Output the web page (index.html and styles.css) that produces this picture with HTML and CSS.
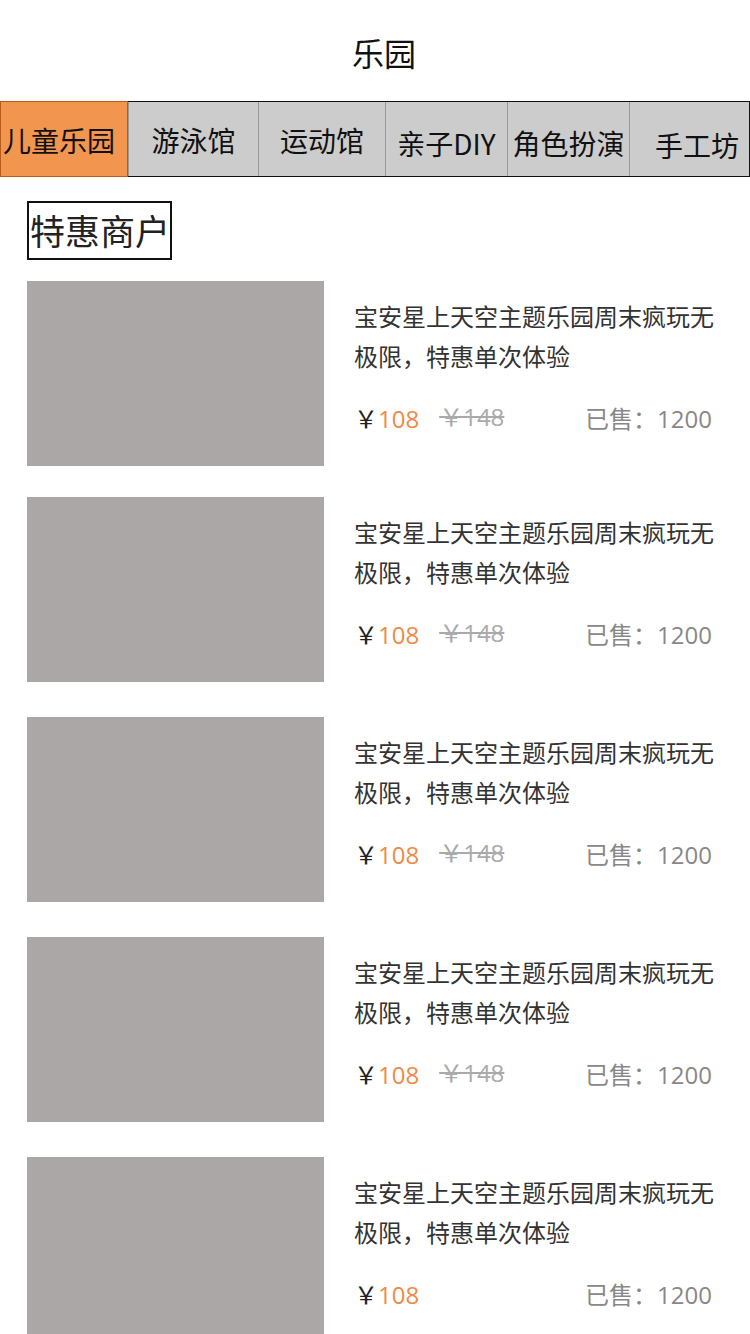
FILE: index.html
```html
<!DOCTYPE html>
<html lang="zh-CN">
<head>
<meta charset="utf-8">
<title>乐园</title>
<link rel="stylesheet" href="styles.css">
</head>
<body>
<header class="header">乐园</header>
<nav class="tabs">
  <div class="tab tab-active">儿童乐园</div>
  <div class="tab">游泳馆</div>
  <div class="tab">运动馆</div>
  <div class="tab tab-low">亲子DIY</div>
  <div class="tab tab-low">角色扮演</div>
  <div class="tab tab-lower">手工坊</div>
</nav>
<div class="section">
  <h2 class="section-title">特惠商户</h2>
</div>
<ul class="list">
  <li class="item">
    <div class="thumb"></div>
    <div class="info">
      <p class="name">宝安星上天空主题乐园周末疯玩无极限，特惠单次体验</p>
      <div class="meta">
        <span class="price"><span class="yen">￥</span>108</span>
        <span class="old">￥148</span>
        <span class="sold">已售：1200</span>
      </div>
    </div>
  </li>
  <li class="item">
    <div class="thumb"></div>
    <div class="info">
      <p class="name">宝安星上天空主题乐园周末疯玩无极限，特惠单次体验</p>
      <div class="meta">
        <span class="price"><span class="yen">￥</span>108</span>
        <span class="old">￥148</span>
        <span class="sold">已售：1200</span>
      </div>
    </div>
  </li>
  <li class="item">
    <div class="thumb"></div>
    <div class="info">
      <p class="name">宝安星上天空主题乐园周末疯玩无极限，特惠单次体验</p>
      <div class="meta">
        <span class="price"><span class="yen">￥</span>108</span>
        <span class="old">￥148</span>
        <span class="sold">已售：1200</span>
      </div>
    </div>
  </li>
  <li class="item">
    <div class="thumb"></div>
    <div class="info">
      <p class="name">宝安星上天空主题乐园周末疯玩无极限，特惠单次体验</p>
      <div class="meta">
        <span class="price"><span class="yen">￥</span>108</span>
        <span class="old">￥148</span>
        <span class="sold">已售：1200</span>
      </div>
    </div>
  </li>
  <li class="item">
    <div class="thumb"></div>
    <div class="info">
      <p class="name">宝安星上天空主题乐园周末疯玩无极限，特惠单次体验</p>
      <div class="meta">
        <span class="price"><span class="yen">￥</span>108</span>
        <span class="sold">已售：1200</span>
      </div>
    </div>
  </li>
</ul>
</body>
</html>
```

FILE: styles.css
```css
* { box-sizing: border-box; }
html, body {
  margin: 0;
  padding: 0;
  background: #fff;
}
body {
  font-family: "Noto Sans CJK SC", "Noto Sans", sans-serif;
  color: #111;
  width: 750px;
  overflow: hidden;
}
.header {
  height: 101px;
  display: flex;
  align-items: center;
  justify-content: center;
  font-size: 32px;
  color: #111;
  padding-top: 2px;
  padding-left: 18px;
}
.tabs {
  display: grid;
  grid-template-columns: 128px 130px 127px 122px 122px 121px;
  height: 76px;
  border-top: 1px solid #111;
  border-bottom: 1px solid #111;
  border-right: 1px solid #111;
  background: #cccccc;
}
.tab {
  display: flex;
  align-items: center;
  justify-content: center;
  font-size: 28px;
  color: #111;
  border-left: 1px solid #999;
  white-space: nowrap;
  padding-top: 2px;
}
.tab-active {
  background: #f2954f;
  border: 1px solid #b85a1c;
  margin-top: -1px;
  margin-bottom: -1px;
  justify-content: flex-start;
  padding-left: 2px;
}
.tab-low { padding-top: 8px; }
.tab-lower { padding-top: 12px; padding-left: 14px; }
.section {
  padding: 24px 0 0 27px;
}
.section-title {
  display: inline-block;
  margin: 0;
  width: 145px;
  height: 59px;
  border: 2px solid #111;
  font-size: 35px;
  font-weight: normal;
  line-height: 53px;
  padding-left: 1px;
  color: #222;
  white-space: nowrap;
}
.list {
  list-style: none;
  margin: 0;
  padding: 21px 0 0 27px;
}
.item {
  display: flex;
  height: 185px;
}
.item + .item { margin-top: 35px; }
.item:first-child { margin-bottom: -4px; }
.thumb {
  width: 297px;
  height: 185px;
  background: #aba7a6;
  flex: none;
}
.info {
  flex: 1;
  padding: 15px 34px 0 30px;
}
.name {
  margin: 0;
  font-size: 24px;
  line-height: 40px;
  color: #333;
}
.meta {
  display: flex;
  align-items: baseline;
  margin-top: 23px;
  line-height: 40px;
  font-size: 24px;
  font-family: "Open Sans", "Noto Sans CJK SC", sans-serif;
}
.price {
  color: #f08a45;
}
.yen {
  color: #222;
}
.old {
  color: #aaa;
  text-decoration: line-through;
  margin-left: 20px;
  position: relative;
  top: -2px;
}
.sold {
  margin-left: auto;
  margin-right: 4px;
  color: #888;
}
```
